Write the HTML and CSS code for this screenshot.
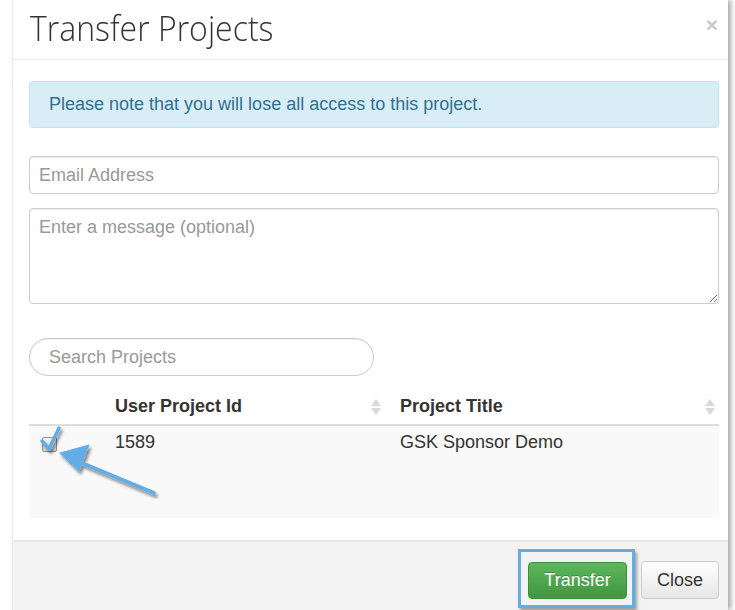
FILE: index.html
```html
<!DOCTYPE html>
<html lang="en">
<head>
<meta charset="utf-8">
<title>Transfer Projects</title>
<link rel="stylesheet" href="styles.css">
</head>
<body>
<div class="modal">
  <div class="modal-header">
    <h4 class="modal-title">Transfer Projects</h4>
    <span class="close">&times;</span>
  </div>
  <div class="modal-body">
    <div class="alert">Please note that you will lose all access to this project.</div>
    <input class="form-control email" type="text" placeholder="Email Address">
    <textarea class="form-control message" placeholder="Enter a message (optional)"></textarea>
    <input class="form-control search" type="text" placeholder="Search Projects">
    <div class="table-wrap">
      <table class="projects">
        <colgroup>
          <col class="col-check">
          <col class="col-id">
          <col>
        </colgroup>
        <thead>
          <tr>
            <th></th>
            <th><span class="th-label">User Project Id</span><span class="sort"></span></th>
            <th><span class="th-label">Project Title</span><span class="sort"></span></th>
          </tr>
        </thead>
        <tbody>
          <tr>
            <td class="cell-check"><span class="checkbox"></span></td>
            <td>1589</td>
            <td>GSK Sponsor Demo</td>
          </tr>
        </tbody>
      </table>
      <svg class="pointer" width="160" height="110" viewBox="0 0 160 110">
        <defs>
          <filter id="drop" x="-20%" y="-20%" width="140%" height="140%">
            <feGaussianBlur in="SourceAlpha" stdDeviation="1.6"/>
            <feOffset dx="2" dy="3" result="b"/>
            <feComponentTransfer><feFuncA type="linear" slope="0.45"/></feComponentTransfer>
            <feMerge><feMergeNode/><feMergeNode in="SourceGraphic"/></feMerge>
          </filter>
        </defs>
        <g filter="url(#drop)" fill="#62ade4" stroke="#62ade4" stroke-linecap="round" stroke-linejoin="round">
          <polyline points="13,52 20,60 30,39" fill="none" stroke-width="3.5"/>
          <line x1="125" y1="104" x2="48" y2="72" stroke-width="4"/>
          <polygon points="31,64 60,56 50,82" stroke-width="1"/>
        </g>
      </svg>
    </div>
  </div>
  <div class="modal-footer">
    <span class="highlight"><button class="btn btn-success" type="button">Transfer</button></span>
    <button class="btn btn-default" type="button">Close</button>
  </div>
</div>
</body>
</html>
```

FILE: styles.css
```css
html, body {
  margin: 0;
  padding: 0;
  background: #fff;
}

body {
  font-family: "Liberation Sans", Arial, sans-serif;
  font-size: 18px;
  color: #333;
  overflow: hidden;
}

.modal {
  margin-left: 12px;
  width: 715px;
  height: 610px;
  background: #fff;
  border-left: 1px solid #ececec;
  box-shadow: 3px 0 5px rgba(0, 0, 0, 0.35);
  display: flex;
  flex-direction: column;
}

.modal-header {
  height: 59px;
  border-bottom: 1px solid #e9e9e9;
  display: flex;
  align-items: center;
  justify-content: space-between;
  padding: 0 10px 0 17px;
}

.modal-title {
  margin: 0;
  font-family: "Open Sans", sans-serif;
  font-weight: 300;
  font-size: 32px;
  color: #333;
  position: relative;
  top: -2px;
  transform: scaleY(1.08);
}

.close {
  font-family: "Liberation Sans", Arial, sans-serif;
  font-weight: bold;
  font-size: 21px;
  color: #c8c8c8;
  position: relative;
  top: -5px;
}

.modal-body {
  padding: 21px 9px 0 16px;
  display: flex;
  flex-direction: column;
  flex: 1;
}

.alert {
  height: 45px;
  display: flex;
  align-items: center;
  padding: 0 19px;
  background: #d9edf7;
  border: 1px solid #bce8f1;
  border-radius: 4px;
  color: #31708f;
}

.form-control {
  box-sizing: border-box;
  width: 100%;
  font-family: "Liberation Sans", Arial, sans-serif;
  font-size: 18px;
  color: #555;
  background: #fff;
  border: 1px solid #ccc;
  border-radius: 4px;
  box-shadow: inset 0 1px 1px rgba(0, 0, 0, 0.075);
  padding: 0 9px;
  margin: 0;
  outline: none;
}

.form-control::placeholder {
  color: #999;
}

.email {
  margin-top: 28px;
  height: 38px;
}

.message {
  margin-top: 14px;
  height: 96px;
  padding-top: 8px;
  resize: vertical;
  display: block;
}

.search {
  margin-top: 34px;
  width: 345px;
  height: 38px;
  border-radius: 19px;
  padding-left: 19px;
}

.table-wrap {
  position: relative;
  margin-top: 15px;
}

.projects {
  width: 100%;
  border-collapse: collapse;
  table-layout: fixed;
}

.col-check {
  width: 71px;
}

.col-id {
  width: 285px;
}

.projects th {
  height: 33px;
  text-align: left;
  font-weight: bold;
  padding: 0 4px 0 15px;
  border-bottom: 2px solid #ddd;
  color: #333;
  position: relative;
}

.projects th .th-label {
  position: relative;
  top: -1px;
}

.projects td {
  background: #f9f9f9;
  height: 86px;
  vertical-align: top;
  padding: 6px 15px 0;
  color: #333;
}

.projects td.cell-check {
  padding-left: 13px;
}

.checkbox {
  display: block;
  width: 13px;
  height: 13px;
  margin-top: 5px;
  border: 1px solid #8f8f8f;
  border-radius: 2px;
  background: linear-gradient(#f4f4f4, #dcdcdc);
}

.sort {
  position: absolute;
  right: 4px;
  top: 8px;
  width: 10px;
  height: 16px;
}

.sort::before,
.sort::after {
  content: "";
  position: absolute;
  left: 0;
  border-left: 5px solid transparent;
  border-right: 5px solid transparent;
}

.sort::before {
  top: 0;
  border-bottom: 7px solid #d9d9d9;
}

.sort::after {
  bottom: 0;
  border-top: 7px solid #d9d9d9;
}

.pointer {
  position: absolute;
  left: 0;
  top: -2px;
  pointer-events: none;
}

.modal-footer {
  height: 70px;
  box-sizing: border-box;
  border-top: 2px solid #e6e6e6;
  background: #f3f3f3;
  display: flex;
  justify-content: flex-end;
  align-items: flex-start;
  padding: 7px 9px 0 0;
}

.highlight {
  display: inline-flex;
  border: 3px solid #62ade4;
  padding: 10px 5px 6px 7px;
  box-shadow: 2px 3px 3px rgba(0, 0, 0, 0.35);
}

.btn {
  font-family: "Liberation Sans", Arial, sans-serif;
  font-size: 18px;
  border-radius: 4px;
  height: 37px;
  cursor: pointer;
}

.btn-success {
  width: 99px;
  color: #fff;
  border: 1px solid #3e8f3e;
  background: linear-gradient(#5cb85c, #419641);
  text-shadow: 0 -1px 0 rgba(0, 0, 0, 0.2);
}

.btn-default {
  margin-left: 6px;
  margin-top: 12px;
  width: 78px;
  height: 38px;
  color: #333;
  border: 1px solid #ccc;
  background: linear-gradient(#fff, #e6e6e6);
}
```
